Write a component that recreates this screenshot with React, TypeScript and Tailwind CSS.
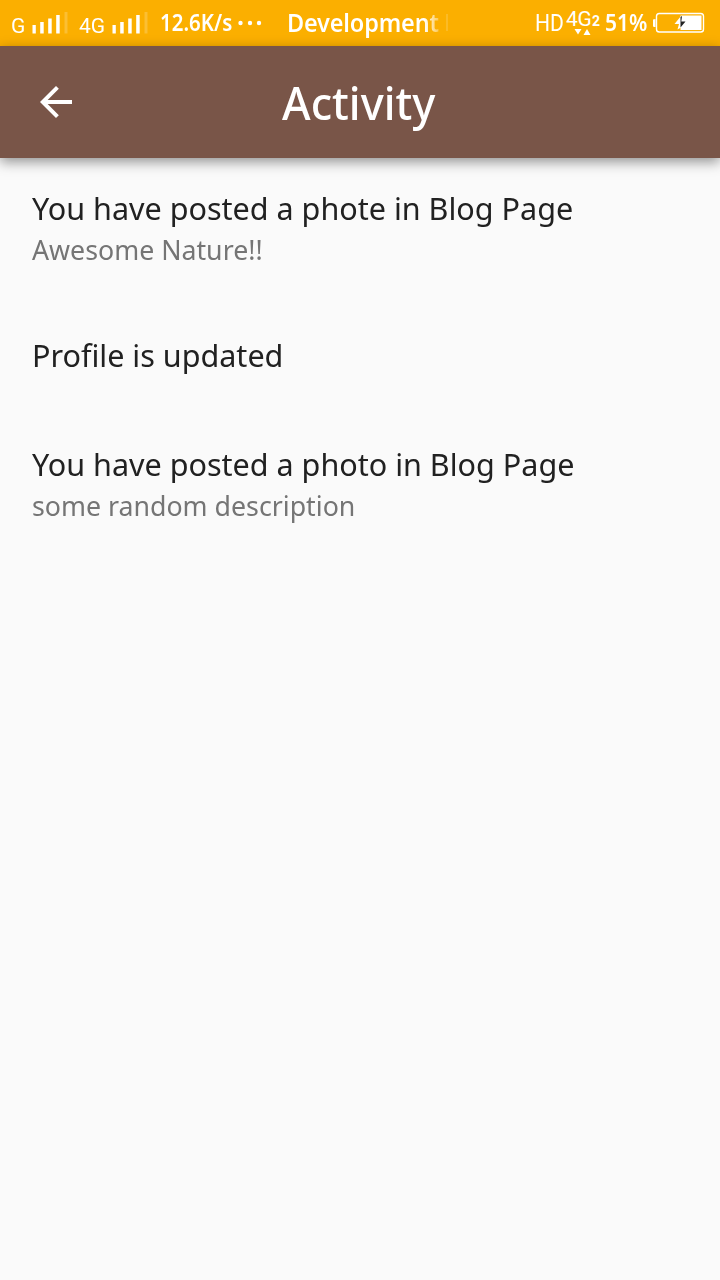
type Activity = { title: string; description?: string };

const activities: Activity[] = [
  { title: 'You have posted a phote in Blog Page', description: 'Awesome Nature!!' },
  { title: 'Profile is updated' },
  { title: 'You have posted a photo in Blog Page', description: 'some random description' },
];

function SignalBars() {
  return (
    <svg className="h-[46px] w-[36px] shrink-0" viewBox="0 0 36 46" fill="#fff">
      <rect x="0.5" y="25" width="3.3" height="8.5" />
      <rect x="8.2" y="22" width="3.5" height="11.5" />
      <rect x="16.2" y="18.5" width="3.5" height="15" />
      <rect x="24.2" y="15" width="3.5" height="18.5" />
      <rect x="32.5" y="12" width="3" height="21.5" opacity="0.2" />
    </svg>
  );
}

function DataType() {
  return (
    <div className="flex h-[46px] w-[38px] shrink-0 flex-col font-['Roboto',sans-serif]">
      <div className="flex h-[28px] items-baseline pt-[7px] leading-[24px]">
        <span className="-ml-px w-[26px] text-[21px] font-normal tracking-[-0.4px]">4G</span>
        <span className="text-[14px] leading-none font-bold">2</span>
      </div>
      <svg className="ml-[7px] h-[8px] w-[18px]" viewBox="0 0 18 8" fill="#fff">
        <path d="M0.5 1h7L4 6.5z" />
        <path d="M9.5 7h7L13 1z" />
      </svg>
    </div>
  );
}

function Battery() {
  return (
    <svg className="h-[46px] w-[52px] shrink-0" viewBox="0 0 52 46" fill="none">
      <path d="M2.5 19a5 4 0 0 0 0 8z" fill="#fff" />
      <rect x="3.5" y="13.5" width="47" height="18.5" rx="2.8" stroke="#fff" strokeWidth="1.4" />
      <rect x="27.5" y="15.5" width="21" height="14.5" fill="#fff" />
      <path d="M28 16L21.5 24H26L24.5 29.5l3.5-2V16z" fill="#fff" />
      <path d="M27.5 17l1.5-1-.7 5.5h4.2L27.5 27.5z" fill="#222" />
    </svg>
  );
}

function StatusBar() {
  return (
    <div className="flex h-[46px] items-start overflow-hidden bg-[#fbaf00] pl-[11px] leading-[46px] whitespace-nowrap text-white">
      <span className="w-[21px] origin-left scale-x-105 pt-[3px] font-['Roboto',sans-serif] text-[20px]">G</span>
      <SignalBars />
      <span className="ml-[11px] w-[33px] origin-left scale-x-105 pt-[3px] font-['Roboto',sans-serif] text-[20px]">
        4G
      </span>
      <SignalBars />
      <span className="ml-[12px] w-[77px] origin-left scale-x-[0.89] text-[23px] leading-[45px] font-semibold">
        12.6K/s
      </span>
      <svg className="h-[46px] w-[26px] shrink-0" viewBox="0 0 26 46" fill="#fff">
        <circle cx="3.5" cy="23" r="2.2" />
        <circle cx="13" cy="23" r="2.2" />
        <circle cx="22" cy="23" r="2.2" />
      </svg>
      <div className="ml-[24px] flex w-[163px] shrink-0 overflow-hidden">
        <span className="w-[159px] shrink-0 origin-left scale-x-[0.96] bg-linear-to-r from-white from-90% to-white/30 bg-clip-text text-[24.5px] leading-[45px] font-semibold tracking-[-0.2px] text-transparent">
          Development
        </span>
        <span className="mt-[14px] h-[17px] w-[2px] bg-white/15" />
      </div>
      <span className="ml-[85px] w-[32px] origin-left scale-x-[0.88] font-['Roboto',sans-serif] text-[24px] font-normal">
        HD
      </span>
      <DataType />
      <span className="w-[48px] origin-left scale-x-[0.91] text-[23px] leading-[45px] font-semibold">51%</span>
      <Battery />
    </div>
  );
}

function AppBar() {
  return (
    <header className="z-10 grid h-[112px] grid-cols-[1fr_auto_1fr] items-center bg-[#795548] pr-[34px] pl-8 text-white shadow-[0_4px_12px_rgba(0,0,0,0.42)]">
      <button type="button" aria-label="Back" className="size-12">
        <svg className="size-12" viewBox="0 0 24 24" fill="#fff">
          <path d="M20 11H7.83l5.59-5.59L12 4l-8 8 8 8 1.41-1.41L7.83 13H20v-2z" />
        </svg>
      </button>
      <h1 className="origin-center scale-x-[0.95] text-[46px] leading-[60px] font-medium">Activity</h1>
    </header>
  );
}

function ActivityTile({ title, description }: Activity) {
  return (
    <li className={description ? 'h-[144px] pt-[30px] pl-8' : 'h-[112px] pt-[33px] pl-8'}>
      <p className="w-max origin-left scale-x-[0.985] text-[31px] leading-[41px] text-[#212121]">{title}</p>
      {description && (
        <p className="w-max origin-left scale-x-[0.99] text-[27px] leading-[41px] text-[#757575]">
          {description}
        </p>
      )}
    </li>
  );
}

export default function App() {
  return (
    <div className="flex h-[1280px] w-[720px] flex-col overflow-hidden bg-[#fafafa] font-['Noto_Sans',sans-serif]">
      <StatusBar />
      <AppBar />
      <ul>
        {activities.map((activity) => (
          <ActivityTile key={activity.title} {...activity} />
        ))}
      </ul>
    </div>
  );
}
